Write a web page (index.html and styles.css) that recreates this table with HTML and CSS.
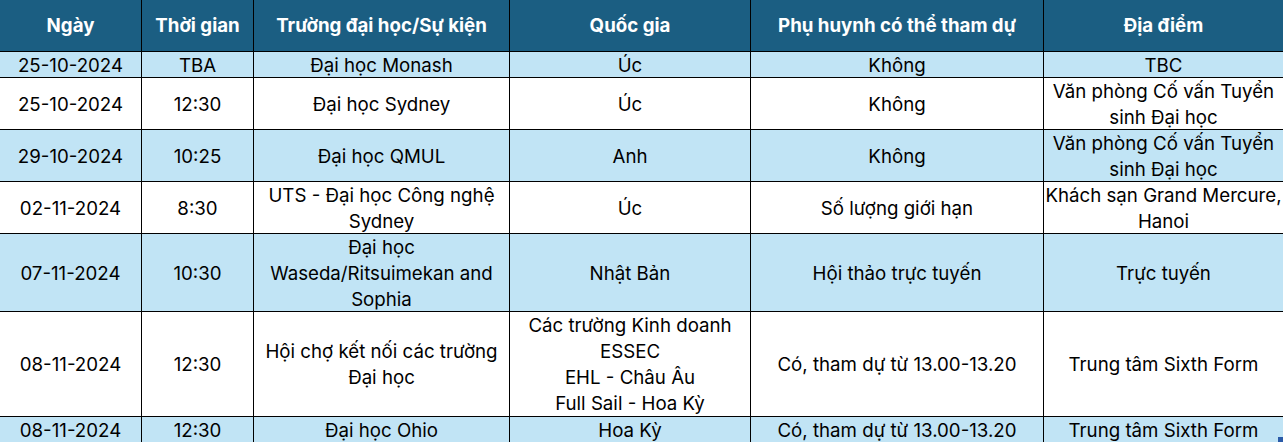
FILE: index.html
```html
<!DOCTYPE html>
<html lang="vi">
<head>
<meta charset="utf-8">
<title>Lịch sự kiện</title>
<link rel="stylesheet" href="styles.css">
</head>
<body>
<div class="schedule" role="table">
  <div class="cell head">Ngày</div>
  <div class="cell head">Thời gian</div>
  <div class="cell head">Trường đại học/Sự kiện</div>
  <div class="cell head">Quốc gia</div>
  <div class="cell head">Phụ huynh có thể tham dự</div>
  <div class="cell head last">Địa điểm</div>

  <div class="cell alt">25-10-2024</div>
  <div class="cell alt">TBA</div>
  <div class="cell alt">Đại học Monash</div>
  <div class="cell alt">Úc</div>
  <div class="cell alt">Không</div>
  <div class="cell alt last">TBC</div>

  <div class="cell">25-10-2024</div>
  <div class="cell">12:30</div>
  <div class="cell">Đại học Sydney</div>
  <div class="cell">Úc</div>
  <div class="cell">Không</div>
  <div class="cell last">Văn phòng Cố vấn Tuyển<br>sinh Đại học</div>

  <div class="cell alt">29-10-2024</div>
  <div class="cell alt">10:25</div>
  <div class="cell alt">Đại học QMUL</div>
  <div class="cell alt">Anh</div>
  <div class="cell alt">Không</div>
  <div class="cell alt last">Văn phòng Cố vấn Tuyển<br>sinh Đại học</div>

  <div class="cell">02-11-2024</div>
  <div class="cell">8:30</div>
  <div class="cell">UTS - Đại học Công nghệ<br>Sydney</div>
  <div class="cell">Úc</div>
  <div class="cell">Số lượng giới hạn</div>
  <div class="cell last">Khách sạn Grand Mercure,<br>Hanoi</div>

  <div class="cell alt">07-11-2024</div>
  <div class="cell alt">10:30</div>
  <div class="cell alt">Đại học<br>Waseda/Ritsuimekan and<br>Sophia</div>
  <div class="cell alt">Nhật Bản</div>
  <div class="cell alt">Hội thảo trực tuyến</div>
  <div class="cell alt last">Trực tuyến</div>

  <div class="cell">08-11-2024</div>
  <div class="cell">12:30</div>
  <div class="cell">Hội chợ kết nối các trường<br>Đại học</div>
  <div class="cell">Các trường Kinh doanh<br>ESSEC<br>EHL - Châu Âu<br>Full Sail - Hoa Kỳ</div>
  <div class="cell">Có, tham dự từ 13.00-13.20</div>
  <div class="cell last">Trung tâm Sixth Form</div>

  <div class="cell alt">08-11-2024</div>
  <div class="cell alt">12:30</div>
  <div class="cell alt">Đại học Ohio</div>
  <div class="cell alt">Hoa Kỳ</div>
  <div class="cell alt">Có, tham dự từ 13.00-13.20</div>
  <div class="cell alt last">Trung tâm Sixth Form</div>
</div>
<div class="fill-handle"></div>
</body>
</html>
```
FILE: styles.css
```css
html, body {
  margin: 0;
  padding: 0;
  background: #ffffff;
  overflow: hidden;
}
body {
  width: 1283px;
  height: 442px;
  position: relative;
}
.schedule {
  display: grid;
  grid-template-columns: 142px 112px 256px 241px 293px 239px;
  grid-template-rows: 52px 26px 52px 52px 52px 78px 105px 26px;
  width: 1283px;
  font-family: Inter, "Noto Sans", sans-serif;
  font-size: 18.7px;
  line-height: 26px;
  color: #000000;
}
.cell {
  box-sizing: border-box;
  display: flex;
  align-items: center;
  justify-content: center;
  text-align: center;
  white-space: nowrap;
  overflow: hidden;
  padding-top: 2px;
  border-right: 1px solid #000000;
  border-bottom: 1px solid #000000;
  background: #ffffff;
}
.cell.last { border-right: none; }
.cell.head {
  background: #1b5e82;
  color: #ffffff;
  font-weight: 700;
  padding-top: 1px;
}
.cell.alt { background: #c1e4f5; }

.fill-handle {
  position: absolute;
  right: 0;
  bottom: 0;
  width: 5px;
  height: 5px;
  background: #2a5aa8;
}
```
